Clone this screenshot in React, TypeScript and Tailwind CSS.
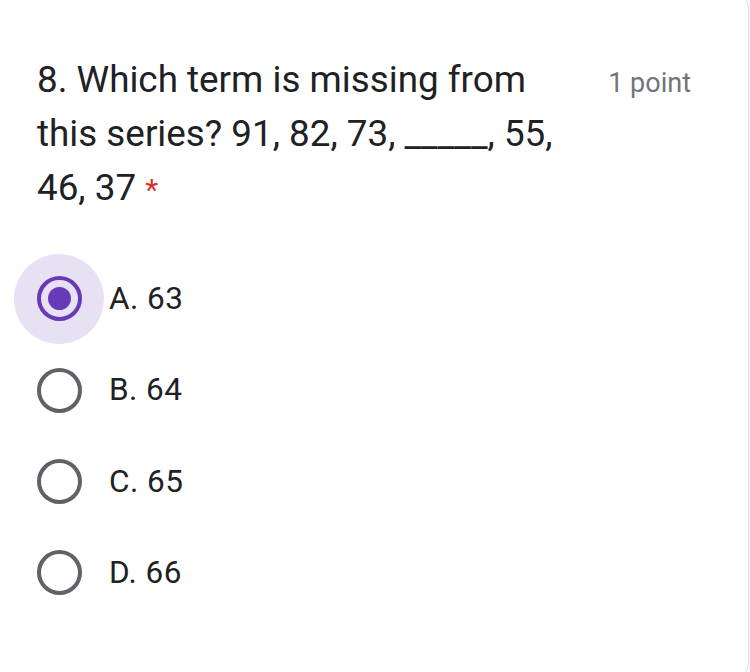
const options = ['A. 63', 'B. 64', 'C. 65', 'D. 66']

export default function App() {
  const selected = 0
  return (
    <div className="w-[750px] h-[672px] overflow-hidden bg-white" style={{ fontFamily: 'Roboto, "Noto Sans", sans-serif' }}>
      <div className="-mt-[6px] h-[684px] w-[749px] rounded-r-[14px] border-r border-[#dadce0] bg-white">
        <div className="flex items-baseline pl-[37px] pt-[59px]">
          <div className="w-[545px] text-[36.8px] leading-[54px] text-[#202124]">
            8. Which term is missing from this series? 91, 82, 73, _____, 55, 46, 37{' '}
            <span className="text-[30px] leading-none text-[#d93025]">*</span>
          </div>
          <div className="ml-auto mr-[57px] text-[27px] text-[#70757a]">1 point</div>
        </div>

        <div className="mt-[38px] pl-[14px]">
          {options.map((opt, i) => (
            <div key={opt} className="flex h-[91.4px] items-center">
              <div
                className={`flex h-[90px] w-[90px] items-center justify-center rounded-full ${i === selected ? 'bg-[#e8e1f3]' : ''}`}
              >
                {i === selected ? (
                  <div className="flex h-[45px] w-[45px] items-center justify-center rounded-full border-[4.5px] border-[#673ab7]">
                    <div className="h-[23px] w-[23px] rounded-full bg-[#673ab7]" />
                  </div>
                ) : (
                  <div className="h-[45px] w-[45px] rounded-full border-[4.5px] border-[#5f6368]" />
                )}
              </div>
              <div className="ml-[5px] text-[31.5px] tracking-[0.45px] text-[#202124]">{opt}</div>
            </div>
          ))}
        </div>
      </div>
    </div>
  )
}
